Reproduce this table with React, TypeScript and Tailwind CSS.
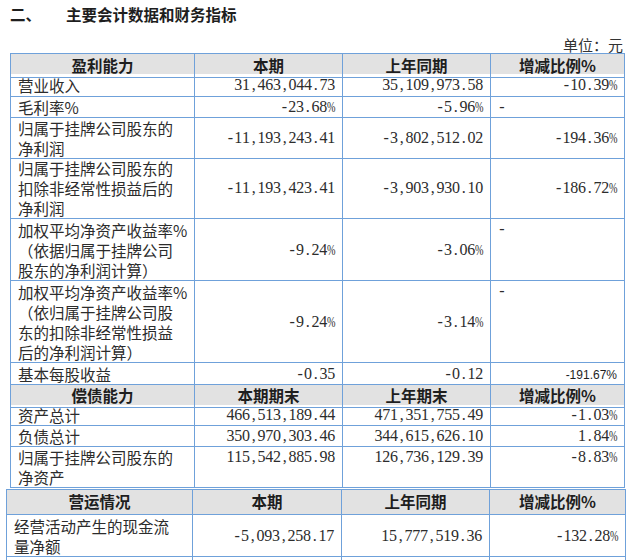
import React from 'react';

type Row = {
    label: string[];
    a: string;
    b: string;
    c: string;
    h: number;
    dashTop?: boolean;
    valTop?: boolean;
    sansC?: boolean;
};

const BORDER = 'border-r border-b border-[#6fa1da]';
const CJK = "font-['Noto_Sans_CJK_SC',sans-serif]";

// per-character boxes so numbers get the even half-width look of the PDF font
function Num({ v }: { v: string }) {
    return (
        <span className="whitespace-nowrap font-['Liberation_Serif',serif] text-[16px]">
            {v.split('').map((ch, i) =>
                ch === '%' ? (
                    <span key={i} className="inline-block w-[8px] overflow-visible">
                        <span className="inline-block scale-x-[0.68] origin-left text-[15px]">%</span>
                    </span>
                ) : (
                    <span key={i} className="inline-block w-[7.75px] text-center">
                        {ch}
                    </span>
                )
            )}
        </span>
    );
}

const profit: Row[] = [
    { label: ['营业收入'], a: '31,463,044.73', b: '35,109,973.58', c: '-10.39%', h: 23 },
    { label: ['毛利率%'], a: '-23.68%', b: '-5.96%', c: '-', h: 21, dashTop: true },
    { label: ['归属于挂牌公司股东的', '净利润'], a: '-11,193,243.41', b: '-3,802,512.02', c: '-194.36%', h: 40 },
    {
        label: ['归属于挂牌公司股东的', '扣除非经常性损益后的', '净利润'],
        a: '-11,193,423.41',
        b: '-3,903,930.10',
        c: '-186.72%',
        h: 61,
    },
    {
        label: ['加权平均净资产收益率%', '（依据归属于挂牌公司', '股东的净利润计算）'],
        a: '-9.24%',
        b: '-3.06%',
        c: '-',
        h: 62,
        dashTop: true,
    },
    {
        label: ['加权平均净资产收益率%', '（依归属于挂牌公司股', '东的扣除非经常性损益', '后的净利润计算）'],
        a: '-9.24%',
        b: '-3.14%',
        c: '-',
        h: 82,
        dashTop: true,
    },
    { label: ['基本每股收益'], a: '-0.35', b: '-0.12', c: '-191.67%', h: 21, sansC: true },
];

const debt: Row[] = [
    { label: ['资产总计'], a: '466,513,189.44', b: '471,351,755.49', c: '-1.03%', h: 21 },
    { label: ['负债总计'], a: '350,970,303.46', b: '344,615,626.10', c: '1.84%', h: 21 },
    { label: ['归属于挂牌公司股东的', '净资产'], a: '115,542,885.98', b: '126,736,129.39', c: '-8.83%', h: 41, valTop: true },
];

const ops: Row[] = [
    { label: ['经营活动产生的现金流', '量净额'], a: '-5,093,258.17', b: '15,777,519.36', c: '-132.28%', h: 42 },
];

function Header({ cols, titles, h }: { cols: string; titles: string[]; h: number }) {
    return (
        <div className={`grid ${cols} bg-[#e2e2e2]`} style={{ height: h }}>
            {titles.map((t) => (
                <div key={t} className={`${BORDER} flex items-center justify-center font-bold text-[15.5px] text-[#1e1e1e] ${CJK}`}>
                    {t}
                </div>
            ))}
        </div>
    );
}

function DataRow({ row, cols }: { row: Row; cols: string }) {
    const align = row.valTop ? 'items-start' : 'items-center';
    return (
        <div className={`grid ${cols}`} style={{ height: row.h }}>
            <div className={`${BORDER} flex items-center pl-[7px] text-[15.5px] leading-[20px] text-[#2c2c2c] ${CJK}`}>
                <div>
                    {row.label.map((l) => (
                        <div key={l} className="whitespace-nowrap">{l}</div>
                    ))}
                </div>
            </div>
            <div className={`${BORDER} flex ${align} justify-end pr-[7px] leading-[20px] text-[#2c2c2c]`}>
                <Num v={row.a} />
            </div>
            <div className={`${BORDER} flex ${align} justify-end pr-[7px] leading-[20px] text-[#2c2c2c]`}>
                <Num v={row.b} />
            </div>
            {row.c === '-' ? (
                <div className={`${BORDER} flex items-start pl-[7px] leading-[20px] text-[#2c2c2c]`}>
                    <Num v="-" />
                </div>
            ) : row.sansC ? (
                <div className={`${BORDER} flex items-center justify-end pr-[7px] pt-[3px] font-['Liberation_Sans',sans-serif] text-[12px] text-[#1e1e1e]`}>
                    {row.c}
                </div>
            ) : (
                <div className={`${BORDER} flex ${align} justify-end pr-[7px] leading-[20px] text-[#2c2c2c]`}>
                    <Num v={row.c} />
                </div>
            )}
        </div>
    );
}

export default function App() {
    const cols1 = 'grid-cols-[184px_148px_148px_134px]';
    const cols2 = 'grid-cols-[186px_149px_148px_136px]';

    return (
        <div className="w-[631px] h-[560px] overflow-hidden bg-white">
            {/* Title */}
            <div className={`flex pt-[4px] pl-[10px] leading-[20px] text-[15.5px] font-bold text-[#1e1e1e] ${CJK}`}>
                <span className="w-[56px]">二、</span>
                <span>主要会计数据和财务指标</span>
            </div>
            <div className={`mt-[13px] h-[16px] leading-[16px] text-right pr-[8px] text-[15px] text-[#333] ${CJK}`}>
                单位：元
            </div>

            {/* Profitability + solvency */}
            <div className="ml-[10px] w-fit border-l border-t border-[#6fa1da]">
                <Header cols={cols1} titles={['盈利能力', '本期', '上年同期', '增减比例%']} h={20} />
                {profit.map((r) => (
                    <DataRow key={r.label.join()} row={r} cols={cols1} />
                ))}
                <Header cols={cols1} titles={['偿债能力', '本期期末', '上年期末', '增减比例%']} h={21} />
                {debt.map((r) => (
                    <DataRow key={r.label.join()} row={r} cols={cols1} />
                ))}
            </div>

            {/* Operations */}
            <div className="ml-[6px] mt-[1px] w-fit border-l border-t border-[#6fa1da]">
                <Header cols={cols2} titles={['营运情况', '本期', '上年同期', '增减比例%']} h={25} />
                {ops.map((r) => (
                    <DataRow key={r.label.join()} row={r} cols={cols2} />
                ))}
                <div className={`grid ${cols2} h-[20px]`}>
                    <div className={BORDER} />
                    <div className={BORDER} />
                    <div className={BORDER} />
                    <div className={BORDER} />
                </div>
            </div>
        </div>
    );
}
